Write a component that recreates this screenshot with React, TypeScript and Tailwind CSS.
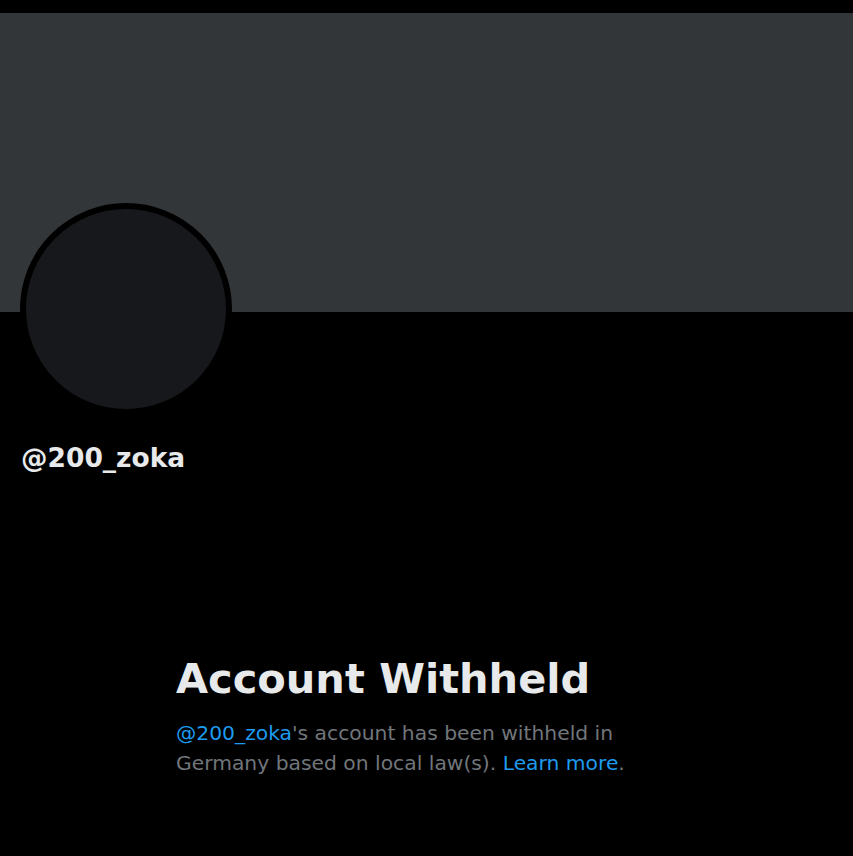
import React from "react";

export default function App() {
  const font = { fontFamily: '"DejaVu Sans", "Liberation Sans", sans-serif' };
  return (
    <div className="min-h-screen w-full bg-black" style={font}>
      <div className="h-[13px] bg-black" />
      <div className="h-[299px] bg-[#333639]" />
      <div className="ml-[20px] mt-[-109px] h-[212px] w-[212px] rounded-full border-[6px] border-black bg-[#16181c]" />
      <div className="ml-[21px] mt-[27px] text-[26.5px] font-bold leading-[32px] text-[#e7e9ea]">
        @200_zoka
      </div>
      <div className="mx-auto mt-[181px] w-[501px]">
        <h1 className="text-[41.5px] font-bold leading-[48px] text-[#e7e9ea]">
          Account Withheld
        </h1>
        <p className="mt-[15px] text-[20.3px] leading-[30px] text-[#71767b]">
          <span className="text-[#1d9bf0]">@200_zoka</span>
          <span>'s account has been withheld in Germany based on local law(s). </span>
          <span className="text-[#1d9bf0]">Learn more</span>
          <span>.</span>
        </p>
      </div>
    </div>
  );
}
